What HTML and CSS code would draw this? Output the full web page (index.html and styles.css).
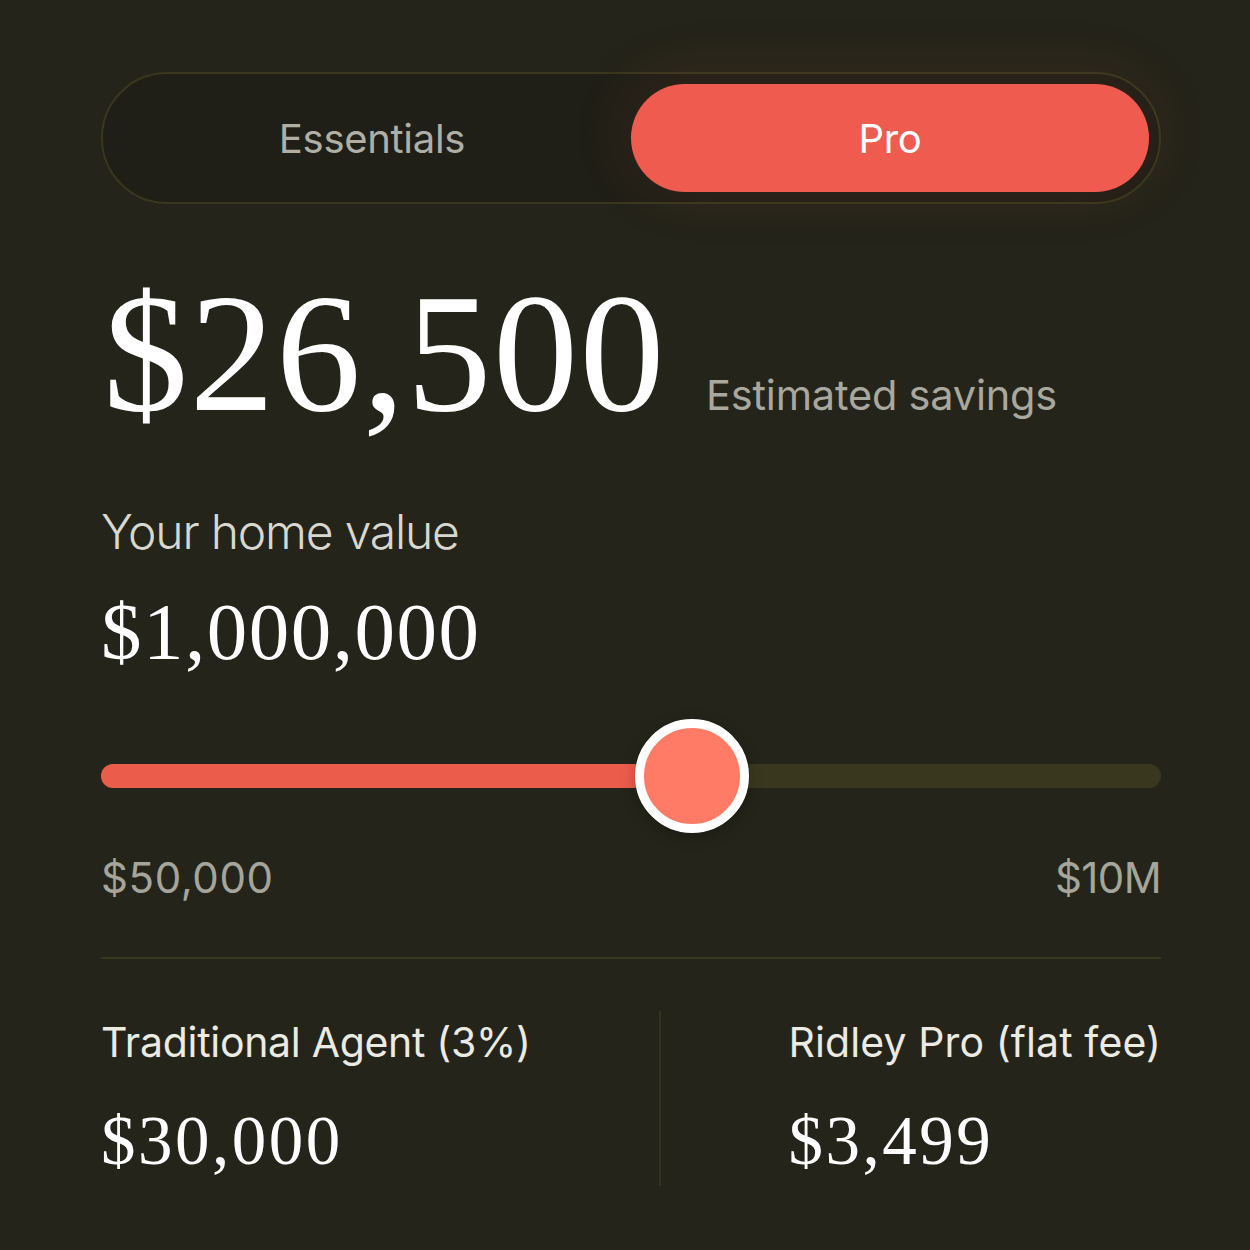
FILE: index.html
```html
<!DOCTYPE html>
<html lang="en">
<head>
<meta charset="utf-8">
<title>Savings calculator</title>
<link rel="stylesheet" href="styles.css">
</head>
<body>
<main class="calc">
  <div class="toggle">
    <button class="tab">Essentials</button>
    <button class="tab tab-active">Pro</button>
  </div>

  <div class="hero">
    <span class="hero-amount">$26,500</span>
    <span class="hero-label">Estimated savings</span>
  </div>

  <div class="home-label">Your home value</div>
  <div class="home-amount">$1,000,000</div>

  <div class="slider">
    <div class="track">
      <div class="track-fill" style="width: 55.8%"></div>
    </div>
    <div class="thumb" style="left: 55.8%"></div>
  </div>

  <div class="range">
    <span>$50,000</span>
    <span class="range-max">$10M</span>
  </div>

  <hr class="divider">

  <div class="compare">
    <div class="col">
      <div class="col-label">Traditional Agent (3%)</div>
      <div class="col-value">$30,000</div>
    </div>
    <div class="vline"></div>
    <div class="col">
      <div class="col-label col-label-wide">Ridley Pro (flat fee)</div>
      <div class="col-value">$3,499</div>
    </div>
  </div>
</main>
</body>
</html>
```

FILE: styles.css
```css
* { box-sizing: border-box; }
html, body { margin: 0; padding: 0; }
body {
  background: #24241a;
  font-family: Inter, "Noto Sans", sans-serif;
  color: #fff;
  width: 1250px;
  height: 1250px;
  overflow: hidden;
}
.calc {
  padding: 72px 89px 0 101px;
}
.toggle {
  display: flex;
  height: 132px;
  border: 2px solid #39371f;
  border-radius: 66px;
  padding: 10px;
  background: #1f1f17;
}
.tab {
  flex: 1;
  border: 0;
  background: transparent;
  font-family: Inter, sans-serif;
  font-size: 40px;
  color: #b0afa6;
  border-radius: 54px;
  letter-spacing: -0.3px;
  padding: 0;
}
.tab-active {
  background: #ef5b4e;
  color: #fff;
  box-shadow: 0 -6px 60px 8px rgba(238, 92, 60, 0.09);
}
.hero {
  display: flex;
  align-items: baseline;
  gap: 40px;
  margin-top: 64px;
  line-height: 1;
}
.hero-amount {
  font-family: "Liberation Serif", serif;
  font-size: 170px;
  letter-spacing: 1.5px;
  margin-left: 2px;
}
.hero-label {
  font-size: 41.5px;
  color: #a9a89f;
  letter-spacing: -0.2px;
}
.home-label {
  margin-top: 70px;
  font-size: 48px;
  line-height: 1;
  font-weight: 300;
  color: #d8d8d0;
  letter-spacing: -1.2px;
}
.home-amount {
  margin-top: 36px;
  font-family: "Liberation Serif", serif;
  font-size: 81px;
  line-height: 1;
  letter-spacing: 1.5px;
}
.slider {
  position: relative;
  margin-top: 46px;
  height: 114px;
  display: flex;
  align-items: center;
}
.track {
  width: 100%;
  height: 24px;
  border-radius: 12px;
  background: #39381f;
  overflow: hidden;
}
.track-fill {
  height: 100%;
  background: #ec5c4b;
}
.thumb {
  position: absolute;
  top: 0;
  width: 114px;
  height: 114px;
  margin-left: -57px;
  border-radius: 50%;
  background: #ff7b65;
  border: 9px solid #fff;
  box-shadow: 0 4px 14px rgba(0, 0, 0, 0.25);
}
.range {
  display: flex;
  justify-content: space-between;
  margin-top: 24px;
  font-size: 42px;
  line-height: 1;
  color: #a5a59c;
  letter-spacing: 0.6px;
}
.range-max {
  letter-spacing: -0.6px;
}
.divider {
  margin: 58px 0 0;
  border: 0;
  height: 2px;
  background: #37361f;
}
.compare {
  display: flex;
  justify-content: space-between;
  margin-top: 52px;
  height: 175px;
}
.col {
  padding-top: 11px;
}
.col-label {
  font-size: 41px;
  line-height: 1;
  color: #ebebe3;
  letter-spacing: -0.3px;
}
.col-label-wide {
  letter-spacing: 0.1px;
}
.col-value {
  margin-top: 44px;
  font-family: "Liberation Serif", serif;
  font-size: 69px;
  line-height: 1;
  letter-spacing: 2.5px;
}
.vline {
  width: 2px;
  background: #34331d;
}
```
